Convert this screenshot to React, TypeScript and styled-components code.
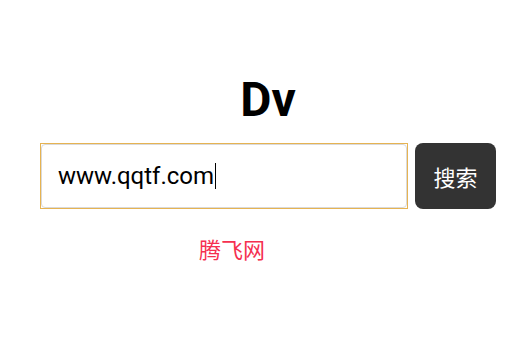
import styled, { createGlobalStyle } from 'styled-components';

const GlobalStyle = createGlobalStyle`
    html, body {
        margin: 0;
        padding: 0;
        background: #ffffff;
        font-family: Roboto, "Noto Sans CJK SC", sans-serif;
    }
`;

const Page = styled.div`
    width: 456px;
    padding: 70px 29px 0 40px;
    display: flex;
    flex-direction: column;
`;

const Title = styled.h1`
    margin: 0;
    text-align: center;
    font-size: 48px;
    font-weight: 700;
    line-height: 60px;
    color: #000000;
`;

const SearchRow = styled.div`
    margin-top: 13px;
    display: flex;
    gap: 7px;
    align-items: stretch;
`;

const InputFrame = styled.div`
    position: relative;
    flex: 1;
    border: 1px solid #e6b352;
    display: flex;
`;

const SearchInput = styled.input`
    flex: 1;
    height: 64px;
    box-sizing: border-box;
    border: 1px solid #dadada;
    border-radius: 4px;
    padding: 0 16px;
    font-family: Roboto, sans-serif;
    font-size: 24px;
    color: #000000;
    outline: none;
`;

/* mirror of the typed text, only there to place the caret after it */
const CaretMirror = styled.span`
    position: absolute;
    left: 17px;
    top: 0;
    height: 64px;
    display: flex;
    align-items: center;
    font-family: Roboto, sans-serif;
    font-size: 24px;
    color: transparent;
    pointer-events: none;
`;

const Caret = styled.span`
    display: inline-block;
    width: 1px;
    height: 26px;
    margin-left: 1px;
    background: #000000;
`;

const SearchBtn = styled.button`
    width: 81px;
    border: none;
    border-radius: 8px;
    background: #333333;
    color: #ffffff;
    font-family: "Noto Sans CJK SC", sans-serif;
    font-size: 22px;
    cursor: pointer;
`;

const SiteLink = styled.a`
    margin-top: 23px;
    margin-left: 159px;
    font-family: "Noto Sans CJK SC", sans-serif;
    font-size: 22px;
    color: #f5304f;
    text-decoration: none;
`;

const query = 'www.qqtf.com';

export default function App() {
    return (
        <>
            <GlobalStyle />
            <Page>
                <Title>Dv</Title>
                <SearchRow>
                    <InputFrame>
                        <SearchInput defaultValue={query} />
                        <CaretMirror>
                            {query}
                            <Caret />
                        </CaretMirror>
                    </InputFrame>
                    <SearchBtn>搜索</SearchBtn>
                </SearchRow>
                <SiteLink href="#">腾飞网</SiteLink>
            </Page>
        </>
    );
}
